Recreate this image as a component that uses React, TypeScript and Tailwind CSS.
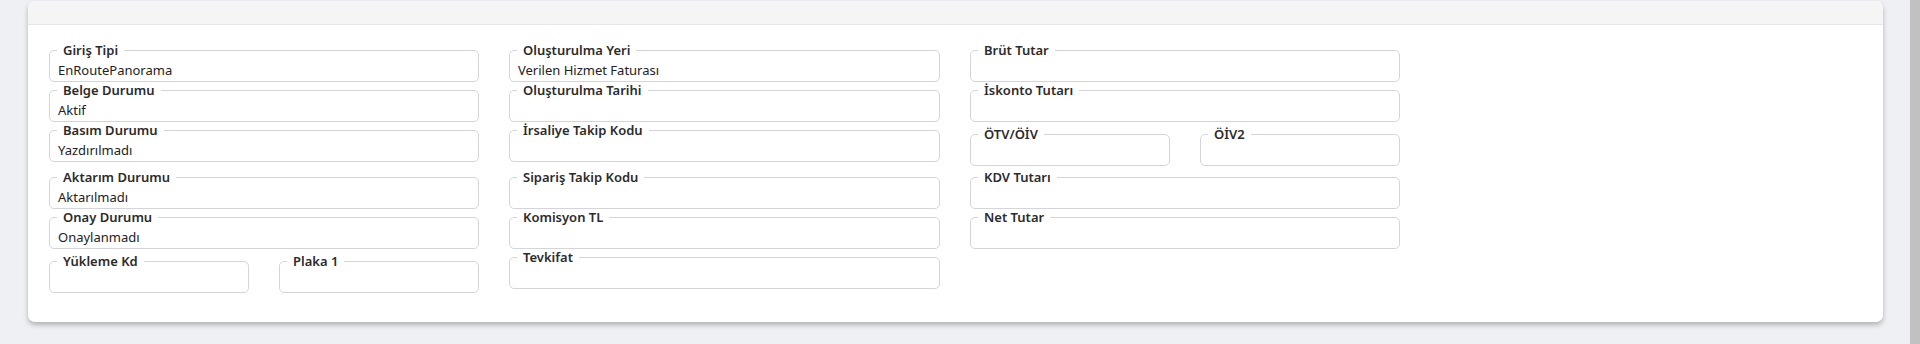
import React from "react";

type Field = { label: string; value?: string };

function Box({ label, value, className = "" }: Field & { className?: string }) {
  return (
    <fieldset
      className={`min-w-0 rounded-[5px] border border-[#d3d5da] px-2 pb-[3px] ${className}`}
    >
      <legend className="ml-[-1px] px-[6px] text-[13px] leading-[17px] font-semibold text-[#2b2b2b]">
        {label}
      </legend>
      <div className="mt-[3px] h-[16px] text-[13px] leading-[16px] text-[#222]">
        {value}
      </div>
    </fieldset>
  );
}

export default function App() {
  return (
    <div
      className="flex h-[344px] w-full bg-[#eff0f4]"
      style={{ fontFamily: '"Noto Sans", "Open Sans", sans-serif' }}
    >
      <div className="flex-1 pt-[1px] pr-[27px] pl-[28px]">
        <div className="h-[321px] overflow-hidden rounded-[7px] bg-white shadow-[0_3px_5px_rgba(0,0,0,0.25)]">
          {/* Header */}
          <div className="h-[24px] border-b border-[#e6e7ea] bg-[#f5f5f6]" />

          {/* Body */}
          <div className="grid grid-cols-[460px_461px_430px] pt-[17px] pl-[21px]">
            {/* Kolon 1 */}
            <div className="flex w-[430px] flex-col">
              <Box label="Giriş Tipi" value="EnRoutePanorama" />
              <Box label="Belge Durumu" value="Aktif" />
              <Box label="Basım Durumu" value="Yazdırılmadı" />
              <Box className="mt-[7px]" label="Aktarım Durumu" value="Aktarılmadı" />
              <Box label="Onay Durumu" value="Onaylanmadı" />
              <div className="mt-[4px] grid grid-cols-2 gap-[30px]">
                <Box label="Yükleme Kd" />
                <Box label="Plaka 1" />
              </div>
            </div>

            {/* Kolon 2 */}
            <div className="flex w-[431px] flex-col">
              <Box label="Oluşturulma Yeri" value="Verilen Hizmet Faturası" />
              <Box label="Oluşturulma Tarihi" />
              <Box label="İrsaliye Takip Kodu" />
              <Box className="mt-[7px]" label="Sipariş Takip Kodu" />
              <Box label="Komisyon TL" />
              <Box label="Tevkifat" />
            </div>

            {/* Kolon 3 */}
            <div className="flex w-[430px] flex-col">
              <Box label="Brüt Tutar" />
              <Box label="İskonto Tutarı" />
              <div className="mt-[4px] grid grid-cols-2 gap-[30px]">
                <Box label="ÖTV/ÖİV" />
                <Box label="ÖİV2" />
              </div>
              <Box className="mt-[3px]" label="KDV Tutarı" />
              <Box label="Net Tutar" />
            </div>
          </div>
        </div>
      </div>

      {/* Scrollbar */}
      <div className="w-[10px] bg-[#c1c1c1]" />
    </div>
  );
}
